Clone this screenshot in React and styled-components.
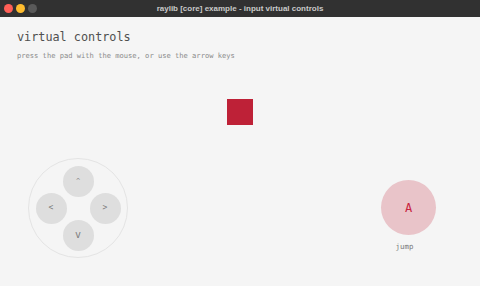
import React from "react";
import styled, { createGlobalStyle } from "styled-components";

const Global = createGlobalStyle`
  html, body { margin: 0; padding: 0; background: #f5f5f5; }
  #root { width: 480px; height: 286px; }
`;

const Window = styled.div`
  width: 480px;
  height: 286px;
  display: flex;
  flex-direction: column;
  overflow: hidden;
  background: #f5f5f5;
`;

const TitleBar = styled.div`
  height: 17px;
  flex: none;
  background: #313131;
  display: grid;
  grid-template-columns: 1fr auto 1fr;
  align-items: center;
  padding: 0 4px;
`;

const Lights = styled.div`
  display: flex;
  gap: 3px;
  align-items: center;
`;

const Light = styled.span`
  width: 9px;
  height: 9px;
  border-radius: 50%;
  background: ${(p) => p.$c};
`;

const Title = styled.div`
  font-family: "Liberation Sans", Arial, sans-serif;
  font-weight: bold;
  font-size: 8px;
  color: #c9c9c9;
  white-space: nowrap;
`;

const Canvas = styled.div`
  flex: 1;
  display: flex;
  flex-direction: column;
  padding: 13px 0 0 0;
  font-family: "DejaVu Sans Mono", monospace;
`;

const Header = styled.div`
  padding-left: 17px;
  display: flex;
  flex-direction: column;
  gap: 7px;
`;

const Heading = styled.div`
  font-size: 11.8px;
  line-height: 14px;
  color: #4f4f4f;
`;

const Sub = styled.div`
  font-size: 7.1px;
  line-height: 9px;
  color: #8a8a8a;
`;

const Player = styled.div`
  width: 26px;
  height: 26px;
  background: #be2137;
  align-self: center;
  margin-top: 39px;
`;

const Controls = styled.div`
  margin-top: auto;
  display: flex;
  justify-content: space-between;
  align-items: flex-start;
  padding: 0 44px 28px 28px;
`;

const Pad = styled.div`
  width: 100px;
  height: 100px;
  box-sizing: border-box;
  border-radius: 50%;
  border: 1px solid #e4e4e4;
  display: grid;
  grid-template-columns: repeat(3, 27px);
  grid-template-rows: repeat(3, 27px);
  place-content: center;
`;

const PadButton = styled.div`
  grid-column: ${(p) => p.$col};
  grid-row: ${(p) => p.$row};
  width: 31px;
  height: 31px;
  border-radius: 50%;
  background: #dedede;
  justify-self: center;
  align-self: center;
  display: flex;
  align-items: center;
  justify-content: center;
  color: #7e7e7e;
  font-size: ${(p) => p.$size || 8}px;
  line-height: 1;
`;

const Action = styled.div`
  display: flex;
  flex-direction: column;
  align-items: center;
  gap: 7px;
  margin-top: 22px;
`;

const ActionButton = styled.div`
  width: 55px;
  height: 55px;
  border-radius: 50%;
  background: #e9c4c9;
  display: flex;
  align-items: center;
  justify-content: center;
  color: #c8243f;
  font-size: 12px;
  font-weight: normal;
`;

const Label = styled.div`
  font-size: 7.4px;
  color: #7a7a7a;
  margin-right: 8px;
`;

export default function App() {
  return (
    <>
      <Global />
      <Window>
        <TitleBar>
          <Lights>
            <Light $c="#ff5f57" />
            <Light $c="#febc2e" />
            <Light $c="#595959" />
          </Lights>
          <Title>raylib [core] example - input virtual controls</Title>
          <span />
        </TitleBar>
        <Canvas>
          <Header>
            <Heading>virtual controls</Heading>
            <Sub>press the pad with the mouse, or use the arrow keys</Sub>
          </Header>
          <Player />
          <Controls>
            <Pad>
              <PadButton $col={2} $row={1} $size={7}>^</PadButton>
              <PadButton $col={1} $row={2}>&lt;</PadButton>
              <PadButton $col={3} $row={2}>&gt;</PadButton>
              <PadButton $col={2} $row={3} $size={10}>v</PadButton>
            </Pad>
            <Action>
              <ActionButton>A</ActionButton>
              <Label>jump</Label>
            </Action>
          </Controls>
        </Canvas>
      </Window>
    </>
  );
}
